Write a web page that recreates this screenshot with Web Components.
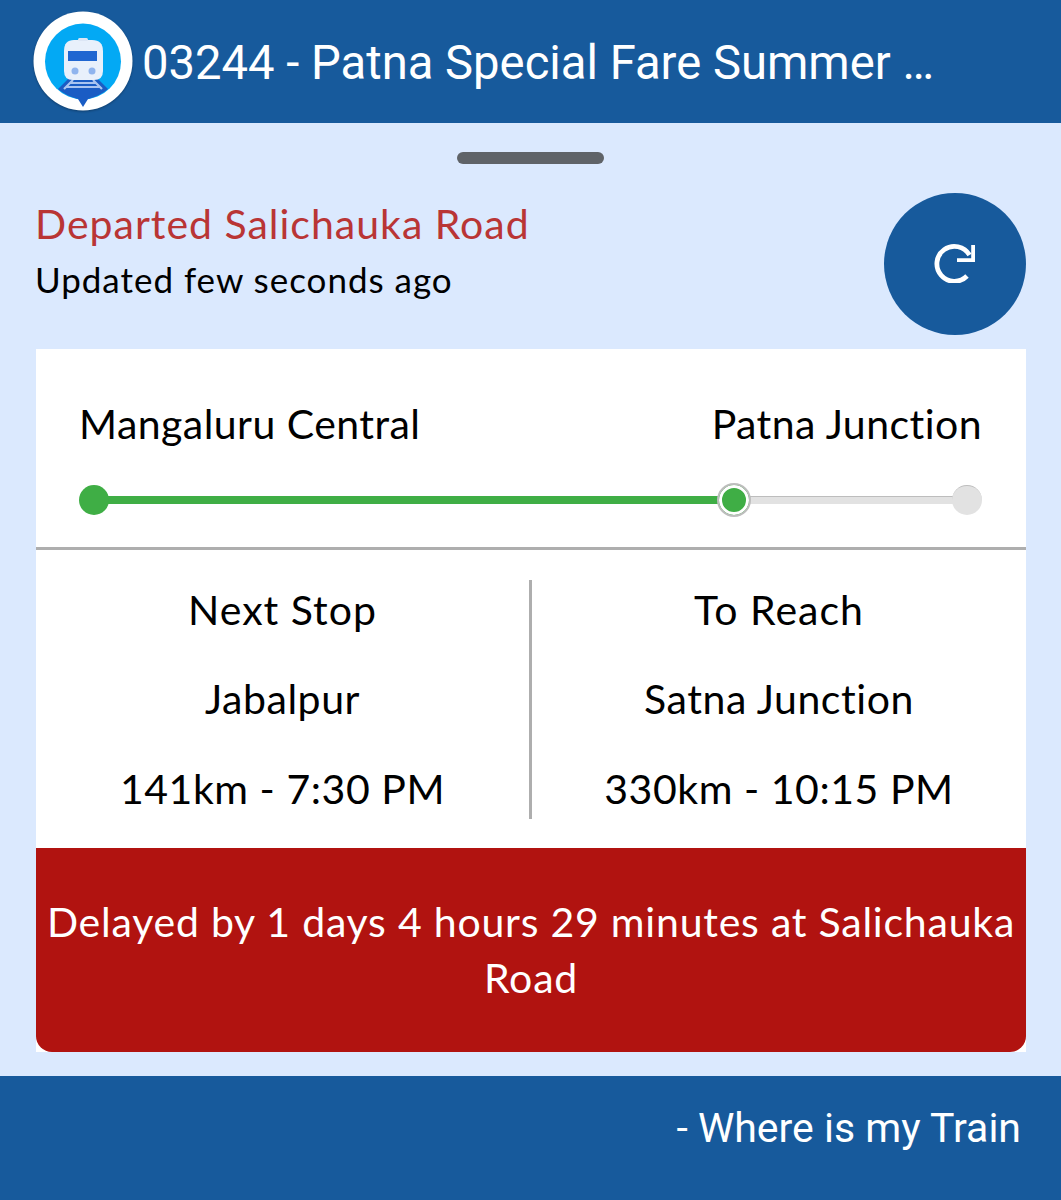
<!DOCTYPE html>
<html>
<head>
<meta charset="utf-8">
<style>
    html, body { margin: 0; padding: 0; }
    body { width: 1061px; height: 1200px; overflow: hidden; background: #dbe9fe; font-family: "Lato", "Noto Sans", sans-serif; font-variant-ligatures: none; }
</style>
</head>
<body>
<app-header>03244 - Patna Special Fare Summer …</app-header>
<status-panel status="Departed Salichauka Road" updated="Updated few seconds ago"></status-panel>
<train-card>
    <route-progress from="Mangaluru Central" to="Patna Junction"></route-progress>
    <div slot="stops">
        <stop-info title="Next Stop" station="Jabalpur" detail="141km - 7:30 PM"></stop-info>
    </div>
    <div slot="stops">
        <stop-info title="To Reach" station="Satna Junction" detail="330km - 10:15 PM"></stop-info>
    </div>
    <span slot="delay">Delayed by 1 days 4 hours 29 minutes at Salichauka Road</span>
</train-card>
<app-footer>- Where is my Train</app-footer>

<script>
class AppHeader extends HTMLElement {
    constructor() {
        super();
        this.attachShadow({ mode: "open" });
        this.shadowRoot.innerHTML = `
            <style>
                :host {
                    display: flex;
                    align-items: center;
                    height: 123px;
                    background: #175a9c;
                    padding-left: 33px;
                    box-sizing: border-box;
                    color: #fff;
                    font: 400 47.2px "Roboto", sans-serif;
                }
                svg { flex: none; margin-right: 9px; margin-top: -1px; filter: drop-shadow(0 1px 1px rgba(0,0,0,.3)); }
                span { white-space: nowrap; position: relative; top: 1px; }
            </style>
            <svg width="100" height="100" viewBox="0 0 100 100">
                <circle cx="50" cy="50" r="49.500" fill="#fff"/>
                <circle cx="50" cy="50.500" r="38" fill="#03a9f4"/>
                <path d="M35 68h30l10 10q-8 7-20 10l-5 8-5-8q-12-3-20-10z" fill="#1a5cc4"/>
                <path d="M40 69l-9 9M60 69l9 9M37 72h26M33 76h34" fill="none" stroke="#a9c4f0" stroke-width="2.200"/>
                <path d="M31 40q0-11 10-11h18q11 0 11 11v20q0 9-9 9H40q-9 0-9-9z" fill="#e8f0fb"/>
                <rect x="45" y="27" width="10" height="3" rx="1.500" fill="#dce6f5"/>
                <rect x="35" y="40" width="29" height="10" fill="#1f66d1"/>
                <circle cx="42" cy="60" r="3.500" fill="#8fb4ee"/>
                <circle cx="59" cy="60" r="3.500" fill="#8fb4ee"/>
            </svg>
            <span><slot></slot></span>
        `;
    }
}

class StatusPanel extends HTMLElement {
    constructor() {
        super();
        this.attachShadow({ mode: "open" });
    }

    connectedCallback() {
        this.shadowRoot.innerHTML = `
            <style>
                :host {
                    display: block;
                    height: 226px;
                    padding: 29px 35px 0 36px;
                    box-sizing: border-box;
                }
                .handle {
                    width: 147px;
                    height: 12px;
                    border-radius: 6px;
                    background: #5f6368;
                    margin-left: 421px;
                }
                .row {
                    display: flex;
                    justify-content: space-between;
                    padding-top: 29px;
                }
                .text { margin-left: -1px; }
                .status {
                    color: #b93535;
                    font-size: 41px;
                    letter-spacing: 1px;
                    line-height: 46px;
                    margin-top: 8px;
                    white-space: nowrap;
                }
                .updated {
                    color: #000;
                    font-size: 35px;
                    letter-spacing: 0.98px;
                    line-height: 40px;
                    margin-top: 12px;
                    white-space: nowrap;
                }
                button {
                    width: 142px;
                    height: 142px;
                    border: 0;
                    padding: 0;
                    border-radius: 50%;
                    background: #175a9c;
                    display: flex;
                    align-items: center;
                    justify-content: center;
                }
            </style>
            <div class="handle"></div>
            <div class="row">
                <div class="text">
                    <div class="status">${this.getAttribute("status") || ""}</div>
                    <div class="updated">${this.getAttribute("updated") || ""}</div>
                </div>
                <button aria-label="Refresh">
                    <svg width="42" height="42" viewBox="0 0 42 42" style="margin:-4px 0 0 -1px">
                        <path d="M33 35A17.500 17.500 0 1 1 35.500 14" fill="none" stroke="#fff" stroke-width="4.800"/>
                        <path d="M41 4v17H23v-3.800h14.200V4z" fill="#fff"/>
                    </svg>
                </button>
            </div>
        `;
    }
}

class TrainCard extends HTMLElement {
    constructor() {
        super();
        this.attachShadow({ mode: "open" });
        this.shadowRoot.innerHTML = `
            <style>
                :host {
                    display: block;
                    width: 990px;
                    margin-left: 36px;
                    background: #fff;
                    color: #000;
                }
                .stops {
                    display: grid;
                    grid-template-columns: 496px 494px;
                    height: 298px;
                    padding-top: 30px;
                    box-sizing: border-box;
                }
                ::slotted([slot="stops"]:first-of-type) { border-right: 3px solid #aeaeae; height: 239px; }
                .delay {
                    background: #b11310;
                    color: #fff;
                    border-radius: 0 0 16px 16px;
                    height: 204px;
                    box-sizing: border-box;
                    padding: 46px 8px 0;
                    text-align: center;
                    font-size: 41px;
                    letter-spacing: 0.78px;
                    line-height: 56px;
                }
            </style>
            <slot></slot>
            <div class="stops"><slot name="stops"></slot></div>
            <div class="delay"><slot name="delay"></slot></div>
        `;
    }
}

class RouteProgress extends HTMLElement {
    constructor() {
        super();
        this.attachShadow({ mode: "open" });
    }

    connectedCallback() {
        this.shadowRoot.innerHTML = `
            <style>
                :host {
                    display: block;
                    height: 201px;
                    padding: 50px 44px 0;
                    box-sizing: border-box;
                    border-bottom: 3px solid #aeaeae;
                }
                .names {
                    display: flex;
                    justify-content: space-between;
                    margin-left: -1px;
                    font-size: 41px;
                    letter-spacing: 0.45px;
                    line-height: 50px;
                }
                .track {
                    position: relative;
                    height: 30px;
                    margin-top: 36px;
                }
                .done, .rest { position: absolute; top: 11px; height: 8px; }
                .done { left: 14px; width: 640px; background: #3fae45; }
                .rest { left: 654px; width: 222px; background: #e2e2e2; border-top: 1px solid #bdbdbd; height: 7px; }
                .dot { position: absolute; border-radius: 50%; box-sizing: border-box; }
                .start { left: -1px; top: 0; width: 30px; height: 30px; background: #3fae45; }
                .now { left: 637px; top: -2px; width: 34px; height: 34px; background: #3fae45; border: 2px solid #bdbdbd; box-shadow: inset 0 0 0 3px #fff; }
                .end { left: 872px; top: 0; width: 30px; height: 30px; background: #e2e2e2; border-top: 1px solid #bdbdbd; }
            </style>
            <div class="names">
                <span>${this.getAttribute("from") || ""}</span>
                <span>${this.getAttribute("to") || ""}</span>
            </div>
            <div class="track">
                <div class="done"></div>
                <div class="rest"></div>
                <div class="dot start"></div>
                <div class="dot now"></div>
                <div class="dot end"></div>
            </div>
        `;
    }
}

class StopInfo extends HTMLElement {
    constructor() {
        super();
        this.attachShadow({ mode: "open" });
    }

    connectedCallback() {
        this.shadowRoot.innerHTML = `
            <style>
                :host {
                    display: flex;
                    flex-direction: column;
                    gap: 39.4px;
                    padding-top: 5px;
                    text-align: center;
                    font-size: 41px;
                    line-height: 50px;
                    white-space: nowrap;
                }
                div { letter-spacing: 0.55px; }
                .title { letter-spacing: 1px; }
            </style>
            <div class="title">${this.getAttribute("title") || ""}</div>
            <div>${this.getAttribute("station") || ""}</div>
            <div>${this.getAttribute("detail") || ""}</div>
        `;
    }
}

class AppFooter extends HTMLElement {
    constructor() {
        super();
        this.attachShadow({ mode: "open" });
        this.shadowRoot.innerHTML = `
            <style>
                :host {
                    display: flex;
                    justify-content: flex-end;
                    align-items: center;
                    position: fixed;
                    left: 0;
                    right: 0;
                    top: 1076px;
                    height: 124px;
                    box-sizing: border-box;
                    padding: 0 40px 20px 0;
                    background: #175a9c;
                    color: #fff;
                    font: 400 41px "Roboto", sans-serif;
                }
            </style>
            <slot></slot>
        `;
    }
}

customElements.define("app-header", AppHeader);
customElements.define("status-panel", StatusPanel);
customElements.define("train-card", TrainCard);
customElements.define("route-progress", RouteProgress);
customElements.define("stop-info", StopInfo);
customElements.define("app-footer", AppFooter);
</script>
</body>
</html>
